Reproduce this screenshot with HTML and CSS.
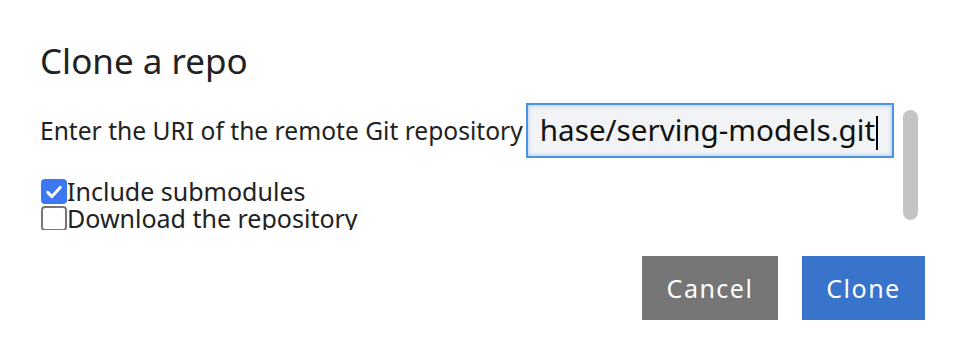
FILE: index.html
```html
<!DOCTYPE html>
<html lang="en">

<head>
    <meta charset="UTF-8">
    <meta name="viewport" content="width=device-width, initial-scale=1.0">
    <title>Clone a repo</title>
    <link rel="stylesheet" href="styles.css">
</head>

<body>

<!-- Dialog -->
<div class="dialog">
    <h1 class="dialog-title">Clone a repo</h1>

    <div class="dialog-body">
        <div class="fields">
            <div class="uri-row">
                <label class="uri-label" for="uri">Enter the URI of the remote Git repository</label>
                <div class="uri-input" id="uri">hase/serving-models.git<span class="caret"></span></div>
            </div>

            <label class="check">
                <span class="box checked">
                    <svg viewBox="0 0 24 24" width="20" height="20"><path d="M4.5 12.5 L9.5 17.5 L19.5 6.5" fill="none" stroke="#fff" stroke-width="3.6" stroke-linecap="round" stroke-linejoin="round"/></svg>
                </span>Include submodules
            </label>
            <label class="check">
                <span class="box"></span>Download the repository
            </label>
        </div>
        <div class="scrollbar"><div class="thumb"></div></div>
    </div>

    <div class="actions">
        <button class="btn btn-cancel">Cancel</button>
        <button class="btn btn-clone">Clone</button>
    </div>
</div>

</body>
</html>
```

FILE: styles.css
```css
/* General Styles */
body {
    margin: 0;
    font-family: "Noto Sans", "Open Sans", sans-serif;
    color: #222222;
    background-color: #FFFFFF;
}

/* Dialog */
.dialog {
    padding: 37px 37px 0 40px;
}

.dialog-title {
    margin: 0;
    font-size: 35px;
    font-weight: 400;
    line-height: 48px;
    color: #222222;
}

.dialog-body {
    display: flex;
    height: 130px;
    margin-top: 15px;
}

.fields {
    flex: 1;
    overflow: hidden;
}

/* URI row */
.uri-row {
    display: flex;
    align-items: center;
    margin-top: 3px;
}

.uri-label {
    font-size: 24.6px;
    margin-right: 3px;
    white-space: nowrap;
}

.uri-input {
    box-sizing: border-box;
    width: 368px;
    height: 55px;
    padding: 0 12px;
    border: 2px solid #4C92E8;
    background-color: #F2F3F4;
    box-shadow: inset 0 0 4px rgba(76, 146, 232, 0.5);
    font-size: 29.6px;
    line-height: 50px;
    color: #111111;
    white-space: nowrap;
    overflow: hidden;
}

.caret {
    display: inline-block;
    width: 2px;
    height: 34px;
    background-color: #000000;
    vertical-align: middle;
    margin-left: 1px;
}

/* Checkboxes */
.check {
    display: flex;
    align-items: center;
    font-size: 25px;
    line-height: 27px;
    white-space: nowrap;
}

.check:first-of-type {
    margin-top: 20px;
}

.box {
    box-sizing: border-box;
    flex: none;
    width: 26px;
    height: 25px;
    margin-left: 1px;
    border: 2px solid #767676;
    border-radius: 4px;
    display: flex;
    align-items: center;
    justify-content: center;
}

.box.checked {
    background-color: #3B78F2;
    border-color: #3B78F2;
}

/* Scrollbar */
.scrollbar {
    width: 15px;
    margin-left: 9px;
    margin-right: 7px;
    padding-top: 10px;
}

.thumb {
    height: 110px;
    background-color: #C4C4C4;
    border-radius: 8px;
}

/* Buttons */
.actions {
    display: flex;
    justify-content: flex-end;
    gap: 24px;
    margin-top: 26px;
}

.btn {
    height: 64px;
    border: none;
    font-family: inherit;
    font-size: 25px;
    letter-spacing: 1.5px;
    color: #FFFFFF;
    cursor: pointer;
}

.btn-cancel {
    width: 136px;
    background-color: #767676;
}

.btn-clone {
    width: 123px;
    background-color: #3874CC;
}
```
